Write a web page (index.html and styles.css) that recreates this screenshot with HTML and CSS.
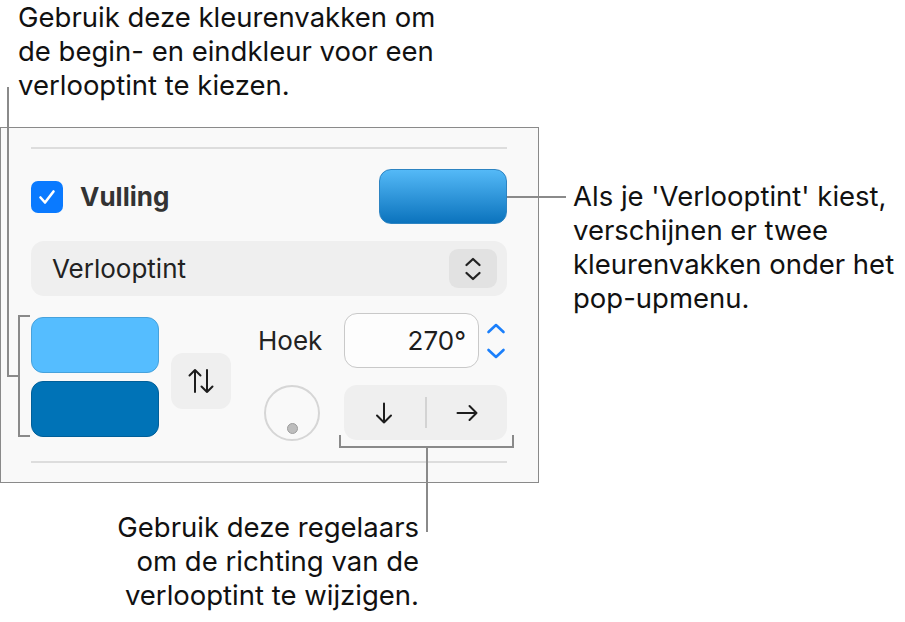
FILE: index.html
```html
<!DOCTYPE html>
<html lang="nl">
<head>
<meta charset="utf-8">
<title>Vulling – verlooptint</title>
<link rel="stylesheet" href="styles.css">
</head>
<body>
<div class="canvas">
  <section class="panel">
    <div class="sep"></div>
    <div class="fill-row">
      <label class="check">
        <span class="box">
          <svg width="32" height="32" viewBox="0 0 32 32"><path d="M9.5 16.5 L14 21.5 L22.5 10.5" fill="none" stroke="#fff" stroke-width="2.6" stroke-linecap="round" stroke-linejoin="round"/></svg>
        </span>
        <span class="check-label">Vulling</span>
      </label>
      <div class="well well-gradient"></div>
    </div>
    <div class="popup">
      <span class="popup-label">Verlooptint</span>
      <span class="popup-btn">
        <svg width="20" height="28" viewBox="0 0 20 28"><path d="M3.5 10 L10 4 L16.5 10" fill="none" stroke="#222" stroke-width="2.3" stroke-linecap="round" stroke-linejoin="round"/><path d="M3.5 18 L10 24 L16.5 18" fill="none" stroke="#222" stroke-width="2.3" stroke-linecap="round" stroke-linejoin="round"/></svg>
      </span>
    </div>
    <div class="gradient-row">
      <div class="wells">
        <div class="well well-light"></div>
        <div class="well well-dark"></div>
      </div>
      <button class="swap" type="button" aria-label="Wissel kleuren">
        <svg width="28" height="30" viewBox="0 0 28 30"><path d="M8 26 V4 M2.5 9.5 L8 4 L13.5 9.5" fill="none" stroke="#1d1d1d" stroke-width="2" stroke-linecap="round" stroke-linejoin="round"/><path d="M20 4 V26 M14.5 20.5 L20 26 L25.5 20.5" fill="none" stroke="#1d1d1d" stroke-width="2" stroke-linecap="round" stroke-linejoin="round"/></svg>
      </button>
      <div class="angle-grid">
        <span class="angle-label">Hoek</span>
        <div class="angle-field-wrap">
          <div class="angle-field">270°</div>
          <div class="stepper">
            <svg width="20" height="38" viewBox="0 0 20 38"><path d="M2.5 10 L10 3 L17.5 10" fill="none" stroke="#1a7ffb" stroke-width="2.6" stroke-linecap="round" stroke-linejoin="round"/><path d="M2.5 28 L10 35 L17.5 28" fill="none" stroke="#1a7ffb" stroke-width="2.6" stroke-linecap="round" stroke-linejoin="round"/></svg>
          </div>
        </div>
        <div class="dial"><span class="dial-dot"></span></div>
        <div class="segmented">
          <span class="seg">
            <svg width="24" height="24" viewBox="0 0 24 24"><path d="M12 2.5 V21.5 M5 14.5 L12 21.5 L19 14.5" fill="none" stroke="#1d1d1d" stroke-width="2" stroke-linecap="round" stroke-linejoin="round"/></svg>
          </span>
          <span class="seg-divider"></span>
          <span class="seg">
            <svg width="24" height="24" viewBox="0 0 24 24"><path d="M2.5 12 H21.5 M14.5 5 L21.5 12 L14.5 19" fill="none" stroke="#1d1d1d" stroke-width="2" stroke-linecap="round" stroke-linejoin="round"/></svg>
          </span>
        </div>
      </div>
    </div>
    <div class="sep sep-bottom"></div>
  </section>

  <p class="note note-top">Gebruik deze kleurenvakken om<br>de begin- en eindkleur voor een<br>verlooptint te kiezen.</p>
  <p class="note note-right">Als je 'Verlooptint' kiest,<br>verschijnen er twee<br>kleurenvakken onder het<br>pop-upmenu.</p>
  <p class="note note-bottom">Gebruik deze regelaars<br>om de richting van de<br>verlooptint te wijzigen.</p>

  <div class="lead lead-top-v"></div>
  <div class="lead lead-top-h"></div>
  <div class="lead lead-bracket-left"></div>
  <div class="lead lead-right"></div>
  <div class="lead lead-bracket-bottom"></div>
  <div class="lead lead-bottom-v"></div>
</div>
</body>
</html>
```

FILE: styles.css
```css
* { box-sizing: border-box; }

html, body {
  margin: 0;
  padding: 0;
  background: #ffffff;
}

body {
  font-family: Inter, "Noto Sans", "DejaVu Sans", sans-serif;
  color: #1a1a1a;
}

.canvas {
  position: relative;
  width: 905px;
  height: 622px;
  overflow: hidden;
  padding-top: 127px;
}

/* ---------- panel ---------- */
.panel {
  width: 539px;
  background: #f9f9f9;
  border: 1px solid #8a8a8a;
  padding: 19px 31px 19px 30px;
  display: flex;
  flex-direction: column;
}

.sep {
  height: 2px;
  background: #dddddd;
}

.sep-bottom {
  margin-top: 21px;
}

.fill-row {
  margin-top: 20px;
  height: 55px;
  display: flex;
  align-items: center;
  justify-content: space-between;
}

.check {
  display: flex;
  align-items: center;
  gap: 17px;
}

.box {
  width: 32px;
  height: 32px;
  border-radius: 7px;
  background: #0a7aff;
  display: block;
}

.box svg { display: block; }

.check-label {
  font-size: 26px;
  font-weight: 700;
  color: #333333;
}

.well {
  width: 128px;
  height: 56px;
  border-radius: 12px;
}

.well-gradient {
  height: 55px;
  background: linear-gradient(#54b9f7, #0b73bd);
  border: 1px solid #2d84c2;
}

.well-light {
  background: #55bdff;
  border: 1.5px solid #47a2dc;
}

.well-dark {
  background: #0073b7;
  border: 1.5px solid #005f99;
}

.popup {
  margin-top: 17px;
  height: 55px;
  border-radius: 13px;
  background: #efefef;
  display: flex;
  align-items: center;
  justify-content: space-between;
  padding: 0 10px 0 21px;
}

.popup-label {
  font-size: 26px;
  color: #222222;
}

.popup-btn {
  width: 48px;
  height: 39px;
  border-radius: 9px;
  background: #e2e2e2;
  display: flex;
  align-items: center;
  justify-content: center;
}

.popup-btn svg { display: block; }

/* ---------- gradient controls ---------- */
.gradient-row {
  margin-top: 17px;
  height: 127px;
  display: flex;
}

.wells {
  padding-top: 4px;
  display: flex;
  flex-direction: column;
  gap: 8px;
}

.swap {
  margin-left: 12px;
  align-self: center;
  margin-top: 8px;
  width: 60px;
  height: 56px;
  border: none;
  border-radius: 12px;
  background: #efefef;
  padding: 0;
  display: flex;
  align-items: center;
  justify-content: center;
}

.swap svg { display: block; }

.angle-grid {
  margin-left: 27px;
  display: grid;
  grid-template-columns: 62px 163px;
  grid-template-rows: 55px 55px;
  column-gap: 24px;
  row-gap: 17px;
}

.angle-label {
  align-self: center;
  font-size: 26px;
  color: #222222;
}

.angle-field-wrap {
  display: flex;
  align-items: center;
}

.angle-field {
  width: 135px;
  height: 55px;
  border-radius: 13px;
  border: 1.5px solid #c9c9c9;
  background: #fdfdfd;
  font-size: 26px;
  color: #1d1d1d;
  display: flex;
  align-items: center;
  justify-content: flex-end;
  padding-right: 12px;
}

.stepper {
  margin-left: 7px;
  display: flex;
}

.stepper svg { display: block; }

.dial {
  justify-self: end;
  align-self: center;
  position: relative;
  width: 56px;
  height: 56px;
  border-radius: 50%;
  border: 2px solid #d6d6d6;
  background: #f9f9f9;
}

.dial-dot {
  position: absolute;
  left: 21px;
  top: 36px;
  width: 11px;
  height: 11px;
  border-radius: 50%;
  background: #bdbdbd;
  border: 1.5px solid #9d9d9d;
}

.segmented {
  width: 163px;
  height: 55px;
  border-radius: 13px;
  background: #efefef;
  display: flex;
  align-items: center;
}

.seg {
  flex: 1;
  display: flex;
  align-items: center;
  justify-content: center;
}

.seg svg { display: block; }

.seg-divider {
  width: 2px;
  height: 31px;
  background: #d3d3d3;
}

/* ---------- annotations ---------- */
.note {
  position: absolute;
  margin: 0;
  font-size: 27.5px;
  line-height: 34px;
  color: #111111;
}

.note-top {
  left: 18px;
  top: 0;
}

.note-right {
  left: 573px;
  top: 179px;
}

.note-bottom {
  right: 486px;
  top: 510px;
  text-align: right;
}

.lead {
  position: absolute;
  background: #8a8a8a;
}

.lead-top-v {
  left: 7px;
  top: 87px;
  width: 2px;
  height: 290px;
}

.lead-top-h {
  left: 7px;
  top: 375px;
  width: 12px;
  height: 2px;
}

.lead-bracket-left {
  left: 18px;
  top: 315px;
  width: 12px;
  height: 122px;
  background: transparent;
  border: 2px solid #8a8a8a;
  border-right: none;
}

.lead-right {
  left: 507px;
  top: 196px;
  width: 59px;
  height: 2px;
}

.lead-bracket-bottom {
  left: 339px;
  top: 435px;
  width: 175px;
  height: 13px;
  background: transparent;
  border: 2px solid #8a8a8a;
  border-top: none;
}

.lead-bottom-v {
  left: 426px;
  top: 447px;
  width: 2px;
  height: 85px;
}
```
